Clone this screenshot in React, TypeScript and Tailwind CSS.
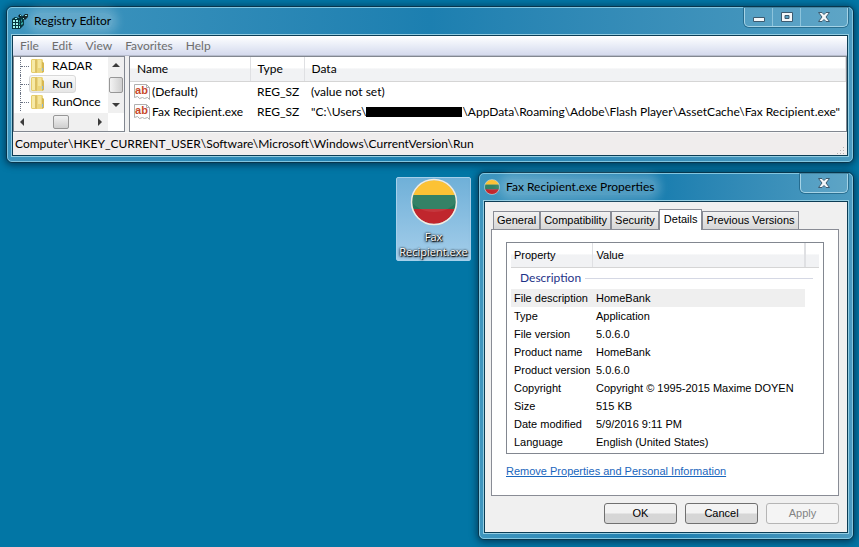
import type { ReactNode } from "react";

const menus = ["File", "Edit", "View", "Favorites", "Help"];
const keys = ["RADAR", "Run", "RunOnce"];
const tabs = [
  "General",
  "Compatibility",
  "Security",
  "Details",
  "Previous Versions",
];
const details = [
  ["File description", "HomeBank"],
  ["Type", "Application"],
  ["File version", "5.0.6.0"],
  ["Product name", "HomeBank"],
  ["Product version", "5.0.6.0"],
  ["Copyright", "Copyright © 1995-2015 Maxime DOYEN"],
  ["Size", "515 KB"],
  ["Date modified", "5/9/2016 9:11 PM"],
  ["Language", "English (United States)"],
];

function RegeditIcon() {
  return (
    <svg viewBox="0 0 16 16" className="size-4 shrink-0">
      <path d="M0 6l3-2 4 1 3-2 2 1v8l-4 4H0z" fill="#06343c" />
      <path
        d="M1 7h2v2H1zM4 7h2v2H4zM1 10h2v2H1zM4 10h2v2H4zM1 13h2v2H1zM4 13h2v2H4zM7 13h1v2H7z"
        fill="#9cf3ee"
      />
      <path d="M7 8l1-1v2l-1 1zM9 7l1-1v2l-1 1zM7 11l1-1v2H7zM9 10l2-1v2l-2 1z" fill="#2fa7a5" />
      <path d="M6 3l2-2 2 2-2 2zM10 4l3-3 3 0v3l-3 3-1-1z" fill="#0b1f24" />
      <path d="M8 2h1v1H8zM13 2h2v1h-2zM11 5h1v1h-1zM3 5h2v1H3z" fill="#8ee6e2" />
    </svg>
  );
}

function FolderIcon() {
  return (
    <svg viewBox="0 0 16 16" className="size-4 shrink-0">
      <path d="M1 2l1-1h5l1 1v13H2l-1-1z" fill="#e6cd6c" />
      <path d="M2 2h3v12H2z" fill="#f7eaa6" />
      <path d="M6 1h6l1 1v12l-1 1H7L6 14z" fill="#ecd67c" />
      <path d="M5 2l2-1v14l-2-1z" fill="#dcc064" />
      <path d="M8 2h3v8H8z" fill="#f5e59c" />
      <path d="M12 4h1l1 1v9l-2 1z" fill="#d6b751" />
      <path d="M12 10h1v3h-1z" fill="#8fb9da" />
    </svg>
  );
}

function StringIcon() {
  return (
    <svg viewBox="0 0 16 16" className="size-4 shrink-0">
      <path
        d="M.5.5h12l3 3v12l-2-2-3 1-2-1-3 1-2-2-3 1z"
        fill="#fdfdfd"
        stroke="#b0b0b0"
      />
      <path d="M12.500.5v3h3" fill="none" stroke="#b0b0b0" />
      <text
        x="7.500"
        y="10"
        textAnchor="middle"
        fontFamily="Liberation Sans, sans-serif"
        fontSize="11"
        fontWeight="700"
        fill="#c8492c"
      >
        ab
      </text>
    </svg>
  );
}

function FlagIcon({ className }: { className: string }) {
  return (
    <svg viewBox="0 0 48 48" className={className}>
      <defs>
        <clipPath id="disc">
          <circle cx="24" cy="24" r="22" />
        </clipPath>
      </defs>
      <g clipPath="url(#disc)">
        <path d="M0 0h48v17H0z" fill="#fcc235" />
        <path d="M0 17h48v14H0z" fill="#23785a" />
        <path d="M0 31h48v17H0z" fill="#c0262d" />
        <path d="M2 17h44v7c-3 5-12 10-22 10S5 29 2 24z" fill="#fff" opacity=".08" />
      </g>
      <circle cx="24" cy="24" r="22.500" fill="none" stroke="#f3ece0" strokeWidth="1.500" />
    </svg>
  );
}

function Arrow({ d, label }: { d: string; label: string }) {
  return (
    <button aria-label={label} className="flex size-4 items-center justify-center">
      <svg viewBox="0 0 8 8" className="size-2">
        <path d={d} fill="#3c3c3c" />
      </svg>
    </button>
  );
}

function CaptionGlyph({ kind }: { kind: string }) {
  return (
    <svg
      viewBox="0 0 14 12"
      className="h-3 w-3.5"
      fill="#f4f7f9"
      stroke="#3d5b70"
      strokeWidth="1"
    >
      {kind === "Minimize" && <path d="M1.500 6.500h11v4h-11z" />}
      {kind === "Maximize" && (
        <path fillRule="evenodd" d="M1.500 1.500h11v9h-11zM5 4.500v3h4v-3z" />
      )}
      {kind === "Close" && (
        <path d="M1.500 1.500h3.500l2 2 2-2h3.500l-3.500 4.500 3.500 4.500H9l-2-2-2 2H1.500L5 6z" />
      )}
    </svg>
  );
}

type WindowProps = {
  title: string;
  icon: ReactNode;
  wide?: boolean;
  className: string;
  children: ReactNode;
};

function Window({ title, icon, wide, className, children }: WindowProps) {
  return (
    <section
      className={`absolute rounded-md border border-[#07364d] bg-[#2081ae] shadow-[0_1px_7px_1px_rgba(0,20,40,0.6)] ${className}`}
    >
      <div className="rounded-[5px] border border-[#82c6e0] bg-linear-to-r from-[#3f96bf] via-[#1c7fb0] to-[#4c9bc0] px-1 pb-[5px]">
        <header className="flex h-[27px] items-start justify-between">
          <div className="flex h-[26px] items-center gap-1">
            {icon}
            <h1 className="rounded-lg bg-white/20 px-0.5 text-[12px] leading-4 shadow-[0_0_8px_5px_rgba(255,255,255,0.2)]">
              {title}
            </h1>
          </div>
          <div className="flex h-[19px] divide-x divide-[#8cc4dc] rounded-b-[5px] border border-t-0 border-[#a5d3e6] bg-white/10 shadow-[0_0_0_1px_rgba(10,70,100,0.5)]">
            {(wide ? ["Minimize", "Maximize", "Close"] : ["Close"]).map((kind) => (
              <button
                key={kind}
                aria-label={kind}
                className={`flex items-center justify-center ${kind === "Close" ? "w-[46px]" : "w-7"}`}
              >
                <CaptionGlyph kind={kind} />
              </button>
            ))}
          </div>
        </header>
        <div className="border border-[#0c3d55] bg-[#f0f0f0] outline outline-[#93cde2]">
          {children}
        </div>
      </div>
    </section>
  );
}

function KeyTree() {
  return (
    <div className="w-28 shrink-0 border border-[#828790] bg-white">
      <div className="flex h-14">
        <ul className="flex-1 pl-1.5">
          {keys.map((key) => (
            <li
              key={key}
              className="flex h-[18px] items-center border-l border-dotted border-gray-500"
            >
              <span className="w-2 shrink-0 border-t border-dotted border-gray-500" />
              <span
                className={`flex h-[18px] items-center gap-1.5 rounded-[3px] border pr-0.5 ${
                  key === "Run"
                    ? "border-[#d9d9d9] bg-linear-to-b from-[#fafafa] to-[#e6e6e6]"
                    : "border-transparent"
                }`}
              >
                <FolderIcon />
                {key}
              </span>
            </li>
          ))}
        </ul>
        <div className="flex w-4 shrink-0 flex-col items-center justify-between bg-[#f0f0f0]">
          <Arrow label="Scroll up" d="M0 6l4-4 4 4z" />
          <span className="h-4 w-3.5 rounded-xs border border-[#979797] bg-linear-to-r from-[#f3f3f3] to-[#cfcfcf]" />
          <Arrow label="Scroll down" d="M0 2l4 4 4-4z" />
        </div>
      </div>
      <div className="mr-4 flex h-[18px] items-center justify-between bg-[#f0f0f0]">
        <Arrow label="Scroll left" d="M6 0L2 4l4 4z" />
        <span className="h-3.5 w-4 rounded-xs border border-[#979797] bg-linear-to-b from-[#f3f3f3] to-[#cfcfcf]" />
        <Arrow label="Scroll right" d="M2 0l4 4-4 4z" />
      </div>
    </div>
  );
}

function RegistryEditor() {
  return (
    <Window
      wide
      title="Registry Editor"
      icon={<RegeditIcon />}
      className="top-1.5 right-[5px] left-1.5 font-[Lato,sans-serif] text-[12px]"
    >
      <nav className="flex h-5 items-center gap-[13px] border-b border-[#b6bccc] bg-linear-to-b from-white via-[#e9edf7] to-[#d5daed] pl-[7px] text-[#6d6d6d]">
        {menus.map((menu) => (
          <button key={menu}>{menu}</button>
        ))}
      </nav>
      <div className="flex gap-1 border-b border-[#f8f8f8]">
        <KeyTree />
        <div className="min-w-0 flex-1 border border-[#828790] bg-white">
          <table className="w-full table-fixed text-left whitespace-nowrap">
            <thead>
              <tr className="h-6 bg-linear-to-b from-white from-45% to-[#f1f2f4] to-50% shadow-[0_1px_0_#d5d5d5]">
                <th className="w-[120px] border-r border-[#dfe0e3] p-0 pl-[7px] font-normal">
                  Name
                </th>
                <th className="w-[54px] border-r border-[#dfe0e3] p-0 pl-[7px] font-normal">
                  Type
                </th>
                <th className="border-r border-[#dfe0e3] p-0 pl-[7px] font-normal">Data</th>
              </tr>
            </thead>
            <tbody>
              <tr className="h-[21px]">
                <td className="p-0 pl-1">
                  <span className="flex items-center gap-0.5">
                    <StringIcon />
                    (Default)
                  </span>
                </td>
                <td className="p-0 pl-[7px]">REG_SZ</td>
                <td className="p-0 pl-[7px]">(value not set)</td>
              </tr>
              <tr className="h-[19px]">
                <td className="p-0 pl-1">
                  <span className="flex items-center gap-0.5">
                    <StringIcon />
                    Fax Recipient.exe
                  </span>
                </td>
                <td className="p-0 pl-[7px]">REG_SZ</td>
                <td className="p-0 pl-[7px]">
                  <span className="flex items-center">
                    "C:\Users\
                    <span className="h-2.5 w-24 shrink-0 bg-black" />
                    \AppData\Roaming\Adobe\Flash Player\AssetCache\Fax Recipient.exe"
                  </span>
                </td>
              </tr>
            </tbody>
          </table>
        </div>
      </div>
      <footer className="flex h-[22px] items-center justify-between bg-[#f0eded] pr-0.5 pl-0.5">
        <span>Computer\HKEY_CURRENT_USER\Software\Microsoft\Windows\CurrentVersion\Run</span>
        <svg viewBox="0 0 8 8" className="size-2 self-end" fill="#b5b1b1">
          <path d="M6 0h1v1H6zM3 3h1v1H3zM6 3h1v1H6zM0 6h1v1H0zM3 6h1v1H3zM6 6h1v1H6z" />
        </svg>
      </footer>
    </Window>
  );
}

function PropertiesDialog() {
  return (
    <Window
      title="Fax Recipient.exe Properties"
      icon={<FlagIcon className="size-4" />}
      className="top-[172px] right-[5px] w-[376px] font-[Lato,sans-serif]"
    >
      <div className="pt-[7px] pr-2 pb-2 pl-1.5 font-['Liberation_Sans',sans-serif] text-[11px]">
        <div role="tablist" className="flex items-end pl-0.5">
          {tabs.map((tab) => (
            <button
              key={tab}
              role="tab"
              aria-selected={tab === "Details"}
              className={
                tab === "Details"
                  ? "z-10 -mb-px h-[21px] border border-b-0 border-[#898c95] bg-white px-1 pb-0.5"
                  : "h-[18px] border border-b-0 border-[#898c95] bg-linear-to-b from-[#f2f2f2] to-[#d6d6d6] px-[3px]"
              }
            >
              {tab}
            </button>
          ))}
        </div>
        <div role="tabpanel" className="border border-[#898c95] bg-white px-3.5 pt-3 pb-4">
          <div className="border border-[#828790] px-1 pb-0.5">
            <table className="w-full text-left">
              <thead>
                <tr className="h-6 bg-linear-to-b from-white from-45% to-[#f1f2f4] to-50% shadow-[0_1px_0_#d5d5d5]">
                  <th className="w-[81px] border-r border-[#dfe0e3] p-0 pl-[3px] font-normal">
                    Property
                  </th>
                  <th className="border-r-2 border-[#dfe0e3] p-0 pl-1 font-normal">Value</th>
                  <th className="w-3.5 p-0" aria-hidden="true" />
                </tr>
              </thead>
              <tbody>
                <tr className="h-[22px]">
                  <th colSpan={3} className="p-0 pr-1.5 pl-[9px] font-normal">
                    <span className="flex items-center gap-1 font-[Lato,sans-serif] text-[12px] leading-4 text-[#1e3287]">
                      Description
                      <span className="h-px flex-1 bg-[#d5d8e4]" />
                    </span>
                  </th>
                </tr>
                {details.map(([property, value], index) => (
                  <tr key={property} className="h-[18px]">
                    <th className={`p-0 pl-[3px] font-normal ${index === 0 ? "bg-[#efefef]" : ""}`}>
                      {property}
                    </th>
                    <td className={`p-0 pl-1 ${index === 0 ? "bg-[#efefef]" : ""}`}>{value}</td>
                    <td className="p-0" />
                  </tr>
                ))}
              </tbody>
            </table>
          </div>
          <a href="#remove" className="mt-[9px] block leading-4 text-[#1a66bd] underline">
            Remove Properties and Personal Information
          </a>
        </div>
        <div className="mt-[7px] flex justify-end gap-2">
          <button className="h-[21px] w-[73px] rounded-[3px] border border-[#707070] bg-linear-to-b from-[#f3f3f3] from-45% to-[#d6d6d6] to-55%">
            OK
          </button>
          <button className="h-[21px] w-[73px] rounded-[3px] border border-[#707070] bg-linear-to-b from-[#f3f3f3] from-45% to-[#d6d6d6] to-55%">
            Cancel
          </button>
          <button
            disabled
            className="h-[21px] w-[73px] rounded-[3px] border border-[#b5b5b5] bg-[#f4f4f4] text-[#838383]"
          >
            Apply
          </button>
        </div>
      </div>
    </Window>
  );
}

export default function App() {
  return (
    <main className="relative min-h-screen overflow-hidden bg-[#0276a5] text-black">
      <RegistryEditor />
      <button className="absolute top-[177px] right-[388px] flex w-[75px] flex-col items-center rounded-xs border border-[#a6d0ea] bg-linear-to-b from-[#6fb0d8] to-[#a3cdea] pb-px font-['Open_Sans',sans-serif] text-[11px] leading-[15px] text-white [text-shadow:0_0_2px_#000,1px_1px_1px_#000,0_1px_3px_#000]">
        <FlagIcon className="mb-[3px] size-12" />
        Fax
        <br />
        Recipient.exe
      </button>
      <PropertiesDialog />
    </main>
  );
}
